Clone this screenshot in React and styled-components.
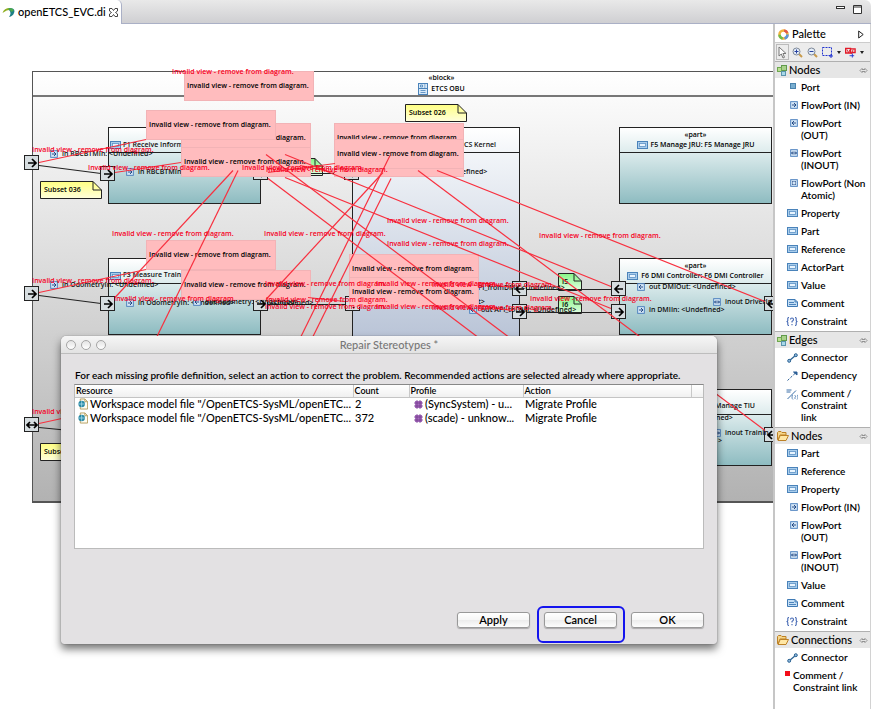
import React from "react";
import styled, { createGlobalStyle, css } from "styled-components";

const GlobalStyle = createGlobalStyle`
  *, *::before, *::after { box-sizing: border-box; }
  body { margin: 0; background: #fff; color: #000; font: 500 11px/12px Lato, "Open Sans", sans-serif; }
  button { font: inherit; color: inherit; }
`;

/* ---------- window frame ---------- */

const Shell = styled.div`
  position: relative;
  display: flex;
  flex-direction: column;
  min-height: 100vh;
  padding-right: 3px;
  background: #fff;
  overflow: hidden;
`;

const TabBar = styled.header`
  display: flex;
  justify-content: space-between;
  height: 24px;
  border-bottom: 1px solid #aab0c6;
  border-radius: 0 6px 0 0;
  background: linear-gradient(#e9e9e9, #cfcfd2);
`;

const Tab = styled.div`
  display: flex;
  align-items: center;
  gap: 3px;
  height: 24px;
  padding: 0 3px 0 2px;
  background: #fff;
  border-right: 1px solid #aab0c6;
  border-radius: 0 5px 0 0;
`;

const PlainButton = styled.button`
  display: flex;
  align-items: center;
  padding: 0;
  border: 0;
  background: none;
`;

const WindowButtons = styled.div`
  display: flex;
  gap: 8px;
  padding: 4px 9px 0 0;
  align-items: flex-start;
`;

const Body = styled.div`
  display: flex;
  flex: 1;
`;

/* ---------- diagram ---------- */

const ORIGIN = 24;

const Canvas = styled.main`
  position: relative;
  flex: 1;
  overflow: hidden;
  font-family: "Open Sans", sans-serif;
  font-size: 7px;
  font-weight: 600;
  line-height: 10px;
  white-space: nowrap;
`;

const place = css`
  position: absolute;
  left: ${(p) => p.$x}px;
  top: ${(p) => p.$y - ORIGIN}px;
`;

const Block = styled.section`
  ${place}
  right: 0;
  height: 432px;
  border: solid #555;
  border-width: 1px 0 2px 1px;
  background: linear-gradient(#fff, #b2b2b2);
`;

const BlockHead = styled.div`
  height: 25px;
  padding: 1px 0 0 77px;
  border-bottom: 2px solid #777;
  text-align: center;
`;

const TitleLine = styled.div`
  display: flex;
  justify-content: center;
  align-items: center;
  gap: 3px;
`;

const tones = {
  teal: "linear-gradient(#fff, #dcebec 33%, #8ebcc1)",
  blue: "linear-gradient(#fff, #f1f4f8 12%, #b1bdd2)",
};

const Part = styled.section`
  ${place}
  width: ${(p) => p.$w}px;
  height: ${(p) => p.$h}px;
  border: 1px solid #222;
  background: ${(p) => tones[p.$tone]};
`;

const PartHead = styled.div`
  height: 25px;
  padding-top: 2px;
  border-bottom: 1px solid #222;
  text-align: center;
`;

const Invalid = styled.div`
  ${place}
  width: 130px;
  height: 30px;
  padding: 9px 2px;
  border: 1px solid #f2b3b6;
  background: #ffbcbe;
`;

const Label = styled.span`
  ${place}
  margin-top: -5px;
  color: ${(p) => (p.$red ? "#f5001d" : "#111")};
`;

const Glyph = styled.span`
  ${place}
  display: flex;
`;

const PortBox = styled.span`
  ${place}
  display: flex;
  align-items: center;
  justify-content: center;
  width: 15px;
  height: 15px;
  margin: -8px 0 0 -8px;
  border: 1px solid #222;
  background: #d6dde0;
`;

const NoteBox = styled.div`
  ${place}
  display: flex;
  align-items: center;
  width: ${(p) => p.$w}px;
  height: 18px;
  padding-left: 4px;
`;

const NoteShape = styled.svg`
  position: absolute;
  inset: 0;
  z-index: -1;
`;

const NoteWrap = styled.div`
  isolation: isolate;
`;

const EdgeLayer = styled.svg`
  position: absolute;
  inset: 0;
  width: 100%;
  height: 100%;
`;

const MSG = "Invalid view - remove from diagram.";

const invalidViews = [
  [181, 123], [146, 110], [181, 147], [334, 147], [334, 123], [334, 139],
  [184, 71], [146, 240], [181, 270], [349, 254], [349, 277],
];

const blackEdges = [
  [39, 165, 101, 173], [39, 295, 101, 303], [39, 427, 80, 431], [268, 173, 345, 173],
  [268, 304, 345, 304], [527, 289, 611, 289], [527, 312, 611, 312],
];

const redEdges = [
  [39, 162, 146, 139], [115, 172, 181, 162], [233, 170, 115, 297], [238, 170, 157, 336],
  [39, 292, 146, 269], [39, 423, 80, 414], [268, 178, 477, 336], [266, 154, 508, 336],
  [285, 177, 611, 308], [285, 154, 611, 286], [418, 170, 765, 430], [437, 170, 765, 301],
  [383, 172, 266, 299], [390, 155, 301, 336], [391, 178, 313, 336], [335, 163, 268, 172],
  [308, 297, 345, 301], [478, 282, 513, 287], [478, 305, 513, 310], [300, 165, 335, 172],
];

const redLabels = [
  [172, 72], [32, 150], [88, 168], [242, 168], [266, 170], [112, 234], [264, 234], [387, 221],
  [387, 244], [539, 236], [32, 281], [114, 299], [265, 284], [376, 284], [432, 285], [266, 300],
  [265, 307], [376, 307], [432, 308], [530, 299], [32, 412],
];

const ports = [
  [32, 163, "r"], [108, 174, "r"], [261, 173, "r"], [352, 173, "r"], [32, 294, "r"], [108, 304, "r"],
  [261, 304, "r"], [353, 304, "r"], [520, 289, "l"], [520, 312, "r"], [619, 289, "l"],
  [619, 312, "r"], [32, 425, "b"], [772, 304, "l"], [772, 435, "l"],
];

const portLabels = [
  [62, 154, "in RBCBTMIn: <Undefined>", "r"], [138, 172, "in RBCBTMIn:", "r"],
  [62, 285, "in OdometryIn: <Undefined>", "r"], [138, 303, "in OdometryIn: <Undefined>", "r"],
  [205, 302, "out odometry: <Undefined>", "l"], [649, 287, "out DMIOut: <Undefined>", "l"],
  [725, 302, "inout DriverIn", "b"], [649, 310, "in DMIIn: <Undefined>", "r"],
  [481, 310, "out API_toDMI: <Undefined>", "l"], [725, 433, "inout TrainIn", "b"],
];

const plainLabels = [
  [462, 172, "efined>"], [478, 288, "PI_fromDMI: <Undefined>"], [478, 302, "t>"],
  [270, 303, "<Undefined>"], [716, 418, "ned>"], [718, 441, ">"],
];

const arrowPaths = {
  r: "M2 6H10M6 2L10 6L6 10",
  l: "M10 6H2M6 2L2 6L6 10",
  b: "M1 6H11M4 3L1 6L4 9M8 3L11 6L8 9",
  n: "M3 3H5M7 3H9V5M9 7V9H7M5 9H3V7M3 5V3",
};

const FlowIcon = ({ dir }) => (
  <svg width="8" height="8" viewBox="0 0 12 12" fill="none" aria-hidden="true">
    <rect x="1" y="1" width="10" height="10" fill="#d5e6f6" stroke="#4a7fbd" strokeWidth="1.4" />
    <g transform="translate(1.5 1.5) scale(.75)"><path d={arrowPaths[dir]} stroke="#173f7d" strokeWidth="1.8" /></g>
  </svg>
);

const PartIcon = () => (
  <svg width="11" height="8" viewBox="0 0 11 8" fill="none" aria-hidden="true">
    <rect x=".5" y=".5" width="10" height="7" fill="#a9cdec" stroke="#4a83ba" />
    <rect x="2.5" y="2.5" width="6" height="3" fill="#e9f5ff" stroke="#5d92c4" strokeWidth=".8" />
  </svg>
);

const BlockIcon = () => (
  <svg width="10" height="12" viewBox="0 0 10 12" fill="none" aria-hidden="true">
    <rect x=".5" y=".5" width="9" height="11" fill="#d8e9f8" stroke="#4a83ba" />
    <path d="M1 5.5H9" stroke="#4a83ba" />
    <path d="M2.5 2V4H4.500V2ZM6 2H7.500M6 4H7.500M2.500 7.500H7.500M2.500 9.500H7.500" stroke="#4a83ba" strokeWidth=".8" />
  </svg>
);

function Port({ x, y, dir }) {
  return (
    <PortBox $x={x} $y={y}>
      <svg width="12" height="12" viewBox="0 0 12 12" fill="none" aria-hidden="true">
        <path d={arrowPaths[dir]} stroke="#000" strokeWidth="1.7" />
      </svg>
    </PortBox>
  );
}

function Note({ x, y, w = 62, color = "yellow", children }) {
  const fold = w > 30 ? 9 : 8;
  const id = `note-${x}-${y}`;
  return (
    <NoteWrap>
      <NoteBox $x={x} $y={y} $w={w}>
        <NoteShape width={w} height="18" fill="none" aria-hidden="true">
          <defs>
            <linearGradient id={id} x2="0" y2="1">
              <stop stopColor={color === "yellow" ? "#ffff82" : "#86f786"} />
              <stop offset="1" stopColor={color === "yellow" ? "#ffffdc" : "#e3fde3"} />
            </linearGradient>
          </defs>
          <path d={`M.5 .5H${w - fold}L${w - 0.5} ${fold}V17.5H.5Z`} fill={`url(#${id})`} stroke="#222" />
          <path d={`M${w - fold} .5V${fold}H${w - 0.5}`} stroke="#222" />
        </NoteShape>
        {children}
      </NoteBox>
    </NoteWrap>
  );
}

function Lines({ data, color }) {
  return (
    <EdgeLayer aria-hidden="true">
      <g transform={`translate(0 ${-ORIGIN})`} stroke={color} strokeWidth="1.2">
        {data.map(([x1, y1, x2, y2]) => (
          <line key={`${x1}-${y1}-${x2}`} x1={x1} y1={y1 + 0.5} x2={x2} y2={y2 + 0.5} />
        ))}
      </g>
    </EdgeLayer>
  );
}

function PartNode({ x, y, title, stereotype }) {
  return (
    <Part $x={x} $y={y} $w={153} $h={77} $tone="teal">
      <PartHead>
        {stereotype && <div>«part»</div>}
        {stereotype && <TitleLine><PartIcon />{title}</TitleLine>}
      </PartHead>
    </Part>
  );
}

function Diagram() {
  return (
    <Canvas>
      <Block $x={32} $y={71}>
        <BlockHead>
          <div>«block»</div>
          <TitleLine><BlockIcon />ETCS OBU</TitleLine>
        </BlockHead>
      </Block>
      <PartNode x={108} y={127} />
      <PartNode x={108} y={258} />
      <Part $x={352} $y={127} $w={168} $h={240} $tone="blue"><PartHead /></Part>
      <PartNode x={619} y={127} title="F5 Manage JRU: F5 Manage JRU" stereotype />
      <PartNode x={619} y={258} title="F6 DMI Controller: F6 DMI Controller" stereotype />
      <PartNode x={619} y={389} />
      <Label $x={464} $y={145}>CS Kernel</Label>
      <Label $x={715} $y={406}>Manage TIU</Label>
      <Glyph $x={110} $y={141}><PartIcon /></Glyph>
      <Label $x={123} $y={145}>F1 Receive Inform</Label>
      <Glyph $x={110} $y={272}><PartIcon /></Glyph>
      <Label $x={123} $y={275}>F3 Measure Train</Label>
      <Note x={40} y={181}>Subset 036</Note>
      <Note x={405} y={104}>Subset 026</Note>
      <Note x={40} y={443}>Subset 037</Note>
      <Note x={299} y={158} w={24} color="green">I1</Note>
      <Note x={558} y={273} w={24} color="green">I5</Note>
      <Note x={558} y={296} w={24} color="green">I6</Note>
      <Lines data={blackEdges} color="#222" />
      {ports.map(([x, y, dir]) => <Port key={`${x}-${y}`} x={x} y={y} dir={dir} />)}
      {portLabels.map(([x, y, text, dir]) => (
        <React.Fragment key={`${x}-${y}`}>
          <Glyph $x={x - 12} $y={y - 4}><FlowIcon dir={dir} /></Glyph>
          <Label $x={x} $y={y}>{text}</Label>
        </React.Fragment>
      ))}
      {plainLabels.map(([x, y, text]) => <Label key={`${x}-${y}`} $x={x} $y={y}>{text}</Label>)}
      {invalidViews.map(([x, y]) => <Invalid key={`${x}-${y}`} $x={x} $y={y}>{MSG}</Invalid>)}
      <Lines data={redEdges} color="#f8303f" />
      {redLabels.map(([x, y]) => <Label key={`${x}-${y}`} $x={x} $y={y} $red>{MSG}</Label>)}
    </Canvas>
  );
}

/* ---------- palette ---------- */

const PaletteBox = styled.aside`
  width: 98px;
  border-left: 2px solid #c6c6c6;
  border-right: 1px solid #d2d2d2;
  background: #fff;
`;

const PaletteTitle = styled.div`
  display: flex;
  align-items: center;
  gap: 3px;
  height: 19px;
  padding: 2px 6px 0 3px;
  border-bottom: 1px solid #ccc;

  & > :last-child { margin-left: auto; }
`;

const Tools = styled.div`
  display: flex;
  align-items: center;
  gap: 2px;
  height: 18px;
  padding-left: 1px;
  background: #ececec;
`;

const ToolButton = styled(PlainButton)`
  justify-content: center;
  width: ${(p) => p.$w || 13}px;
  height: 16px;
  border: 1px solid ${(p) => (p.$on ? "#bbb" : "transparent")};
`;

const DrawerHead = styled.button`
  display: flex;
  align-items: center;
  gap: 2px;
  width: 100%;
  height: 17px;
  padding: 0 2px;
  border: 0;
  border-top: 1px solid #b0b0b0;
  background: #e6e6e6;
  text-align: left;

  & > :last-child { margin-left: auto; }
`;

const DrawerList = styled.div`
  padding-bottom: 1px;
`;

const Item = styled.button`
  display: grid;
  grid-template-columns: 14px 1fr;
  column-gap: 2px;
  width: 100%;
  padding: 3px 0 3px ${(p) => (p.$wide ? 2 : 10)}px;
  border: 0;
  background: none;
  font-size: 10px;
  font-weight: 600;
  text-align: left;
  white-space: pre-line;

  & > svg { justify-self: end; margin-top: 2px; margin-right: 1px; }
`;

const NodesIcon = () => (
  <svg width="10" height="11" viewBox="0 0 10 11" aria-hidden="true">
    <rect x="4.500" y=".5" width="5" height="5" fill="#a9d18a" stroke="#5f9a4b" />
    <rect x=".5" y="2.5" width="4" height="4" fill="#b9e08f" stroke="#6ea650" />
    <rect x="4.500" y="6.500" width="4" height="4" fill="#a8d8e8" stroke="#5b94ad" />
  </svg>
);

const FolderIcon = () => (
  <svg width="12" height="10" viewBox="0 0 12 10" aria-hidden="true">
    <path d="M.5 8.500V1.500L1.500 .5H4L5 1.500H9V4H3L1 9Z" fill="#f6d68a" stroke="#bd8126" />
    <path d="M1 9.500L3.200 4.500H11.500L9 9.500Z" fill="#ffe7a5" stroke="#bd8126" />
  </svg>
);

const PinIcon = () => (
  <svg width="9" height="7" viewBox="0 0 9 7" fill="none" aria-hidden="true">
    <path d="M3.500 1L1 3.500L3.500 6M5.500 1L8 3.500L5.500 6M3 2.500H6M3 4.500H6" stroke="#888" strokeWidth=".9" />
  </svg>
);

const icons = {
  port: <svg width="8" height="7" viewBox="0 0 8 7"><rect x=".5" y=".5" width="5" height="5" fill="#79aed0" stroke="#4b83ad" /></svg>,
  in: <FlowIcon dir="r" />,
  out: <FlowIcon dir="l" />,
  inout: <FlowIcon dir="b" />,
  non: <FlowIcon dir="n" />,
  part: <PartIcon />,
  comment: (
    <svg width="11" height="8" viewBox="0 0 11 8" fill="none">
      <path d="M.5 .5H8L10.500 3V7.500H.5Z" fill="#c4def5" stroke="#3f7ab5" />
      <path d="M2 3.500H7M2 5.500H9M8 .5V3H10.500" stroke="#3f7ab5" strokeWidth=".9" />
    </svg>
  ),
  constraint: (
    <svg width="12" height="9" viewBox="0 0 12 9" fill="none" stroke="#4468b4" strokeWidth="1.100">
      <path d="M3 .5Q1.500 .5 1.800 2.500Q2 4.500 .5 4.500Q2 4.500 1.800 6.500Q1.500 8.500 3 8.500M9 .5Q10.500 .5 10.200 2.500Q10 4.500 11.500 4.500Q10 4.500 10.200 6.500Q10.500 8.500 9 8.500" />
      <path d="M4.500 2.500Q4.500 1 6 1T7.500 2.700Q7.500 3.500 6 4.500V5.500M6 7V8.200" />
    </svg>
  ),
  connector: (
    <svg width="11" height="10" viewBox="0 0 11 10" fill="#8fb9dd" stroke="#2c6392">
      <path d="M2.500 7.500L8.500 2.500" strokeWidth="1.300" />
      <circle cx="2.200" cy="7.800" r="1.500" /><circle cx="8.800" cy="2.200" r="1.500" />
    </svg>
  ),
  dependency: (
    <svg width="11" height="10" viewBox="0 0 11 10" fill="none" stroke="#2c5f96">
      <path d="M.5 9.500L9 1.500" strokeDasharray="2.500 1.500" /><path d="M6.500 1H10V4Z" fill="#2c5f96" />
    </svg>
  ),
  link: (
    <svg width="12" height="11" viewBox="0 0 12 11" fill="none" stroke="#3a6fa8">
      <path d="M1.500 10L10 1.500" /><path d="M.5 1H5.500M.5 3H4.500" /><path d="M7 6Q6 6 6 8T7 10.500M11 6Q12 6 12 8T11 10.500M8.500 7Q9 6 9.500 7T9 8.500V10" strokeWidth=".8" />
    </svg>
  ),
  red: <svg width="5" height="5" viewBox="0 0 5 5"><rect width="5" height="5" fill="#f30d19" /></svg>,
};

const drawers = [
  { title: "Nodes", icon: <NodesIcon />, items: [
    ["port", "Port"], ["in", "FlowPort (IN)"], ["out", "FlowPort (OUT)"], ["inout", "FlowPort (INOUT)"],
    ["non", "FlowPort (Non Atomic)"], ["part", "Property"], ["part", "Part"], ["part", "Reference"],
    ["part", "ActorPart"], ["part", "Value"], ["comment", "Comment"], ["constraint", "Constraint"],
  ] },
  { title: "Edges", icon: <NodesIcon />, items: [
    ["connector", "Connector"], ["dependency", "Dependency"], ["link", "Comment / Constraint\nlink"],
  ] },
  { title: "Nodes", icon: <FolderIcon />, items: [
    ["part", "Part"], ["part", "Reference"], ["part", "Property"], ["in", "FlowPort (IN)"],
    ["out", "FlowPort (OUT)"], ["inout", "FlowPort (INOUT)"], ["part", "Value"],
    ["comment", "Comment"], ["constraint", "Constraint"],
  ] },
  { title: "Connections", icon: <FolderIcon />, items: [
    ["connector", "Connector"], ["red", "Comment / Constraint link"],
  ] },
];

const Magnifier = ({ plus }) => (
  <svg width="11" height="11" viewBox="0 0 11 11" fill="none">
    <path d="M7 7L10 10" stroke="#c89b4c" strokeWidth="2" />
    <circle cx="4.500" cy="4.500" r="3.500" fill="#e5eef8" stroke="#7e8898" />
    <path d={plus ? "M2.500 4.500H6.500M4.500 2.500V6.500" : "M2.500 4.500H6.500"} stroke="#2740a0" />
  </svg>
);

const Caret = () => <svg width="4" height="3" viewBox="0 0 4 3"><path d="M0 0H4L2 3Z" fill="#222" /></svg>;

function Palette() {
  return (
    <PaletteBox>
      <PaletteTitle>
        <svg width="11" height="11" viewBox="0 0 11 11" aria-hidden="true">
          <circle cx="5.500" cy="5.500" r="4" fill="none" stroke="#f0b23c" strokeWidth="2.600" />
          <circle cx="5.500" cy="5.500" r="4" fill="none" stroke="#5b96dd" strokeWidth="2.600" strokeDasharray="5 20.130" />
          <circle cx="5.500" cy="5.500" r="4" fill="none" stroke="#6cbc4b" strokeWidth="2.600" strokeDasharray="5 20.130" strokeDashoffset="-7" />
          <circle cx="5.500" cy="5.500" r="4" fill="none" stroke="#e2574a" strokeWidth="2.600" strokeDasharray="4 21.130" strokeDashoffset="-19" />
        </svg>
        Palette
        <PlainButton aria-label="Hide palette">
          <svg width="6" height="9" viewBox="0 0 6 9"><path d="M.7 1L5.200 4.500L.7 8Z" fill="#fff" stroke="#222" /></svg>
        </PlainButton>
      </PaletteTitle>
      <Tools>
        <ToolButton $on aria-label="Select">
          <svg width="9" height="13" viewBox="0 0 9 13"><path d="M1 1V10L3.300 8L5 12L6.500 11.300L4.900 7.500H8Z" fill="#fff" stroke="#777" /></svg>
        </ToolButton>
        <ToolButton aria-label="Zoom in"><Magnifier plus /></ToolButton>
        <ToolButton aria-label="Zoom out"><Magnifier /></ToolButton>
        <ToolButton aria-label="Marquee">
          <svg width="11" height="11" viewBox="0 0 11 11" fill="none" stroke="#2234d0"><rect x=".5" y=".5" width="9" height="8" strokeDasharray="2 1" /><path d="M7 9H11M9 7V11" /></svg>
        </ToolButton>
        <ToolButton $w={6} aria-label="Marquee options"><Caret /></ToolButton>
        <ToolButton aria-label="Creation tool">
          <svg width="12" height="11" viewBox="0 0 12 11" fill="none"><path d="M.7 1H6V6H.7ZM5 1.500H11V5.500H7" stroke="#e21a28" strokeWidth="1.500" /><path d="M2 2L4 6L5 3L7 7L9 2" stroke="#e21a28" /><path d="M5 9H10M8 6.500V11" stroke="#2234d0" /></svg>
        </ToolButton>
        <ToolButton $w={6} aria-label="Creation options"><Caret /></ToolButton>
      </Tools>
      {drawers.map((d, n) => (
        <section key={n}>
          <DrawerHead>{d.icon}{d.title}<PinIcon /></DrawerHead>
          <DrawerList>
            {d.items.map(([icon, text]) => (
              <Item key={text} $wide={icon === "red"}>{icons[icon]}{icon === "link" ? text.replace("/ ", "/\n") : text}</Item>
            ))}
          </DrawerList>
        </section>
      ))}
    </PaletteBox>
  );
}

/* ---------- dialog ---------- */

const Dialog = styled.section`
  position: absolute;
  top: 336px;
  left: 61px;
  right: 157px;
  border-radius: 5px 5px 3px 3px;
  background: #e3e1e3;
  box-shadow: 0 5px 9px rgba(0, 0, 0, 0.55), 0 0 1px rgba(0, 0, 0, 0.6);
`;

const DialogBar = styled.header`
  display: grid;
  grid-template-columns: 1fr auto 1fr;
  align-items: center;
  height: 18px;
  padding: 0 5px;
  border-bottom: 1px solid #bdbdbd;
  border-radius: 5px 5px 0 0;
  background: linear-gradient(#f6f6f6, #e2e2e2);
`;

const DialogTitle = styled.h1`
  margin: 0;
  color: #777;
  font: inherit;
`;

const Lights = styled.div`
  display: flex;
  gap: 5px;
`;

const Light = styled.button`
  width: 10px;
  height: 10px;
  padding: 0;
  border: 1px solid #a5a5a5;
  border-radius: 50%;
  background: linear-gradient(#e4e4e4, #fff);
`;

const DialogBody = styled.div`
  padding: 15px 13px 16px;
`;

const Message = styled.p`
  margin: 0 0 3px;
  padding-left: 1px;
  font-size: 10px;
  font-weight: 600;
`;

const TableBox = styled.div`
  height: 165px;
  border: 1px solid #bbb;
  border-top-color: #888;
  background: #fff;
`;

const Table = styled.table`
  width: 100%;
  table-layout: fixed;
  border-collapse: collapse;

  th {
    height: 12px;
    padding: 0 1px;
    border-bottom: 1px solid #c4c4c4;
    border-right: 1px solid #c8c8c8;
    background: linear-gradient(#fff, #f0f0f0);
    font-size: 9px;
    line-height: 11px;
    font-weight: 600;
    text-align: left;
  }
  th:last-child { border-right: 0; }
  td { height: 14px; padding: 0 2px; white-space: nowrap; }
`;

const CellText = styled.span`
  display: flex;
  align-items: center;
  gap: 2px;
  padding-left: ${(p) => p.$indent || 0}px;
`;

const Actions = styled.footer`
  display: flex;
  justify-content: flex-end;
  gap: 14px;
  padding-top: 63px;
`;

const PushButton = styled.button`
  position: relative;
  width: 73px;
  height: 16px;
  padding: 0;
  border: 1px solid #999;
  border-radius: 3px;
  background: linear-gradient(#fff, #f6f6f6 50%, #ececec 51%, #fdfdfd);
  box-shadow: 0 1px 1px rgba(0, 0, 0, 0.25);
  line-height: 12px;
  font-weight: 600;

  ${(p) => p.$ring && css`
    &::after {
      content: "";
      position: absolute;
      inset: -7px -9px -16px -8px;
      border: 2px solid #1414ee;
      border-radius: 6px;
    }
  `}
`;

const FileIcon = () => (
  <svg width="11" height="12" viewBox="0 0 11 12" fill="none" aria-hidden="true">
    <path d="M2.500 .5H7.500L10.500 3.500V11.500H2.500Z" fill="#fffdf2" stroke="#b49b5b" />
    <path d="M7.500 .5V3.500H10.500" stroke="#b49b5b" />
    <circle cx="4" cy="6" r="3.500" fill="#2788a5" /><path d="M4 3V9M1 6H7" stroke="#b6e3ee" strokeWidth=".8" />
  </svg>
);

const ProfileIcon = () => (
  <svg width="9" height="9" viewBox="0 0 9 9" aria-hidden="true">
    <rect x="1" y="1" width="7" height="7" fill="#a56cbd" />
    <path d="M3 0V9M6 0V9M0 3H9M0 6H9" stroke="#763c90" strokeWidth=".8" />
  </svg>
);

const rows = [
  ["2", "(SyncSystem) - u..."],
  ["372", "(scade) - unknow..."],
];

function RepairDialog() {
  return (
    <Dialog role="dialog" aria-labelledby="repair-title">
      <DialogBar>
        <Lights><Light aria-label="Close" /><Light aria-label="Minimize" /><Light aria-label="Zoom" /></Lights>
        <DialogTitle id="repair-title">Repair Stereotypes *</DialogTitle>
      </DialogBar>
      <DialogBody>
        <Message>For each missing profile definition, select an action to correct the problem. Recommended actions are selected already where appropriate.</Message>
        <TableBox>
          <Table>
            <colgroup><col /><col width="56" /><col width="114" /><col width="168" /><col width="12" /></colgroup>
            <thead>
              <tr><th>Resource</th><th>Count</th><th>Profile</th><th>Action</th><th aria-label="Filler" /></tr>
            </thead>
            <tbody>
              {rows.map(([count, profile]) => (
                <tr key={count}>
                  <td><CellText $indent={1}><FileIcon />Workspace model file "/OpenETCS-SysML/openETC...</CellText></td>
                  <td>{count}</td>
                  <td><CellText $indent={3}><ProfileIcon />{profile}</CellText></td>
                  <td>Migrate Profile</td>
                  <td />
                </tr>
              ))}
            </tbody>
          </Table>
        </TableBox>
        <Actions>
          <PushButton>Apply</PushButton>
          <PushButton $ring>Cancel</PushButton>
          <PushButton>OK</PushButton>
        </Actions>
      </DialogBody>
    </Dialog>
  );
}

export default function App() {
  return (
    <>
      <GlobalStyle />
      <Shell>
        <TabBar>
          <Tab>
            <svg width="13" height="11" viewBox="0 0 13 11" fill="none" aria-hidden="true">
              <path d="M.5 6Q2 1 8 1L10 3Q6 2 .5 6Z" fill="#8fae22" />
              <path d="M7 1Q14 1 12 6Q11 9 7 10Q10 6 7 3Z" fill="#1d7f86" />
              <path d="M7 1Q12 1 11.500 4L9 5Q9 3 6 2Z" fill="#4aa84c" />
            </svg>
            openETCS_EVC.di
            <PlainButton aria-label="Close tab">
              <svg width="9" height="9" viewBox="0 0 9 9" fill="none"><path d="M.5 .5H3L4.500 2.500L6 .5H8.500V3L6.500 4.500L8.500 6V8.500H6L4.500 6.500L3 8.500H.5V6L2.500 4.500L.5 3Z" stroke="#444" /></svg>
            </PlainButton>
          </Tab>
          <WindowButtons>
            <PlainButton aria-label="Minimize"><svg width="9" height="9" viewBox="0 0 9 9"><rect x=".5" y="2.500" width="8" height="2" fill="#fff" stroke="#333" /></svg></PlainButton>
            <PlainButton aria-label="Maximize"><svg width="9" height="10" viewBox="0 0 9 10"><path d="M.5 1.500H8.500V9.500H.5ZM.5 3H8.500" fill="#fff" stroke="#333" /></svg></PlainButton>
          </WindowButtons>
        </TabBar>
        <Body>
          <Diagram />
          <Palette />
        </Body>
        <RepairDialog />
      </Shell>
    </>
  );
}
